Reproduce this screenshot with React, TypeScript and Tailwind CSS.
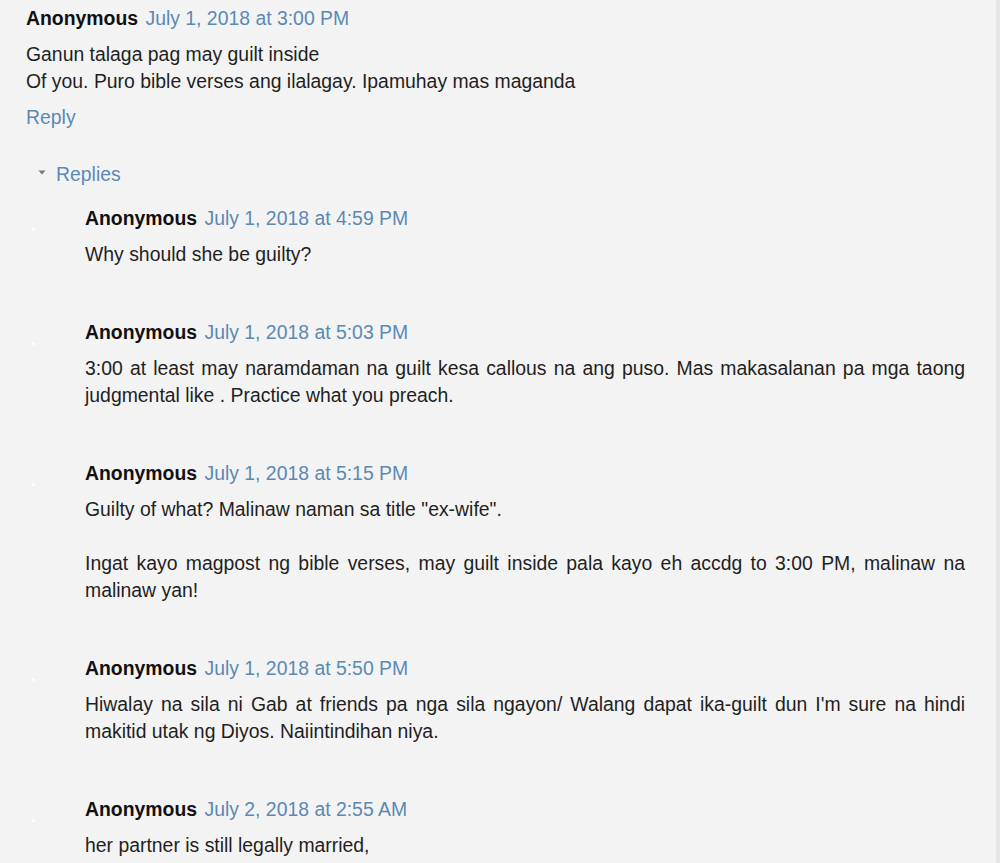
import React from 'react';

type ReplyItem = {
  date: string;
  paragraphs: string[];
};

const replies: ReplyItem[] = [
  { date: 'July 1, 2018 at 4:59 PM', paragraphs: ['Why should she be guilty?'] },
  {
    date: 'July 1, 2018 at 5:03 PM',
    paragraphs: [
      '3:00 at least may naramdaman na guilt kesa callous na ang puso. Mas makasalanan pa mga taong judgmental like . Practice what you preach.',
    ],
  },
  {
    date: 'July 1, 2018 at 5:15 PM',
    paragraphs: [
      'Guilty of what? Malinaw naman sa title "ex-wife".',
      'Ingat kayo magpost ng bible verses, may guilt inside pala kayo eh accdg to 3:00 PM, malinaw na malinaw yan!',
    ],
  },
  {
    date: 'July 1, 2018 at 5:50 PM',
    paragraphs: [
      "Hiwalay na sila ni Gab at friends pa nga sila ngayon/ Walang dapat ika-guilt dun I'm sure na hindi makitid utak ng Diyos. Naiintindihan niya.",
    ],
  },
  { date: 'July 2, 2018 at 2:55 AM', paragraphs: ['her partner is still legally married,'] },
];

const CommentHeader = ({ date }: { date: string }) => (
  <div className="leading-[27px] whitespace-nowrap">
    <span className="font-bold text-[#111]">Anonymous</span>{' '}
    <a className="ml-[2px] text-[#5b89b4]">{date}</a>
  </div>
);

const App: React.FC = () => {
  return (
    <div
      className="w-[1000px] h-[863px] overflow-hidden bg-[#f3f3f3] border-r-4 border-[#e6e6e6] text-[#1f1f1f] text-[19.4px]"
      style={{ fontFamily: '"Liberation Sans", Arial, sans-serif' }}
    >
      <div className="pt-[5px] pl-[26px] pr-[31px]">
        <CommentHeader date="July 1, 2018 at 3:00 PM" />
        <p className="mt-[9px] leading-[27px]">
          Ganun talaga pag may guilt inside
          <br />
          Of you. Puro bible verses ang ilalagay. Ipamuhay mas maganda
        </p>
        <div className="mt-[9px] leading-[27px] text-[#5b89b4]">Reply</div>
      </div>

      <div className="mt-[30px] pl-[37px] flex items-center leading-[27px]">
        <span className="w-[19px] flex items-center">
          <svg width="8" height="5" viewBox="0 0 8 5" className="ml-[1px] -mt-[4px]">
            <path d="M0.5 0.5 L7.5 0.5 L4 4.5 Z" fill="#777" />
          </svg>
        </span>
        <span className="text-[#5b89b4]">Replies</span>
      </div>

      <div className="mt-[17px] pr-[31px] flex flex-col gap-[51px]">
        {replies.map((r, i) => (
          <div key={i} className="flex">
            <div className="w-[85px] shrink-0 pl-[32px] pt-[23px]">
              <div className="w-[3px] h-[3px] rounded-full bg-white" />
            </div>
            <div className="flex-1 min-w-0">
              <CommentHeader date={r.date} />
              <div className="mt-[9px] leading-[27px] text-justify">
                {r.paragraphs.map((p, j) => (
                  <p key={j} className={j > 0 ? 'mt-[27px]' : ''}>
                    {p}
                  </p>
                ))}
              </div>
            </div>
          </div>
        ))}
      </div>
    </div>
  );
};

export default App;
